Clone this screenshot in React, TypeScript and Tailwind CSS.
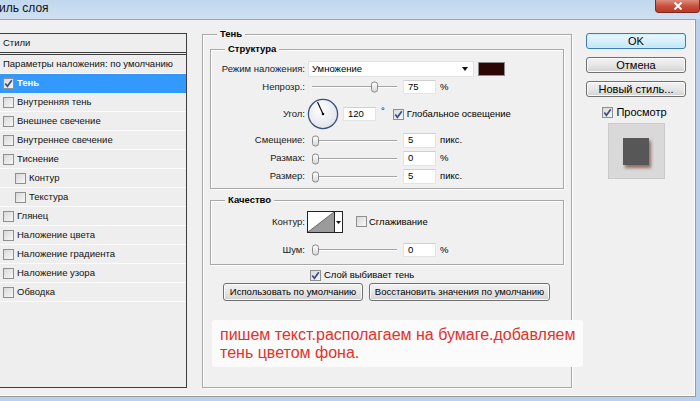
import React from 'react';

const ui = "font-['Liberation_Sans','Arial',sans-serif]";

function Check({ on = false }: { on?: boolean }) {
  return (
    <span className="inline-flex w-[11px] h-[11px] shrink-0 items-center justify-center border border-[#8e8f8f] bg-gradient-to-br from-[#d9d9d9] to-[#f7f7f7]">
      {on && (
        <svg viewBox="0 0 9 9" className="w-[9px] h-[9px]">
          <path d="M1.3 4.6 L3.4 7.3 L7.8 1.2" stroke="#3a4c8c" strokeWidth="1.7" fill="none" />
        </svg>
      )}
    </span>
  );
}

function Slider({ thumb }: { thumb: string }) {
  return (
    <div className="relative w-[89px] h-full ml-[3px]">
      <div className="absolute left-[4px] right-0 top-1/2 -translate-y-1/2 h-[2px] border-t border-[#a3a3a3] border-b border-b-white" />
      <div className={`absolute top-1/2 -translate-y-1/2 w-[7px] h-[11px] rounded-[3px] border border-[#8a8a8a] bg-gradient-to-b from-white to-[#d7d7d7] ${thumb}`} />
    </div>
  );
}

function Field({ value }: { value: string }) {
  return (
    <div className="w-[33px] h-full bg-white border border-[#e4e4e4] border-t-[#d0d0d0] pl-[4px] flex items-center text-[9.5px] text-black">
      {value}
    </div>
  );
}

function Row({ label, className, children }: { label: string; className: string; children: React.ReactNode }) {
  return (
    <div className={`flex items-center ${className}`}>
      <div className="w-[94px] text-right text-[9.5px] text-[#1a1a1a] shrink-0">{label}</div>
      {children}
    </div>
  );
}

function Group({ title, className, children }: { title: string; className: string; children: React.ReactNode }) {
  return (
    <div className={`relative border border-[#a8a8a8] shadow-[inset_1px_1px_0_#ffffff,1px_1px_0_#ffffff] ${className}`}>
      <span className="absolute -top-[7px] left-[14px] px-[3px] bg-[#f0f0f0] text-[9.5px] font-bold leading-[12px] text-black">{title}</span>
      {children}
    </div>
  );
}

function Button({ children, className }: { children: React.ReactNode; className: string }) {
  return (
    <div className={`flex items-center justify-center rounded-[3px] border border-[#707070] bg-gradient-to-b from-[#f3f3f3] via-[#e6e6e6] to-[#d3d3d3] text-black shadow-[inset_0_0_0_1px_#fbfbfb] ${className}`}>
      {children}
    </div>
  );
}

const styles = [
  { name: 'Тень', on: true, sel: true },
  { name: 'Внутренняя тень' },
  { name: 'Внешнее свечение' },
  { name: 'Внутреннее свечение' },
  { name: 'Тиснение' },
  { name: 'Контур', sub: true },
  { name: 'Текстура', sub: true },
  { name: 'Глянец' },
  { name: 'Наложение цвета' },
  { name: 'Наложение градиента' },
  { name: 'Наложение узора' },
  { name: 'Обводка' },
];

export default function App() {
  return (
    <div className={`w-[700px] h-[401px] overflow-hidden flex flex-col bg-[#b9d1ea] ${ui}`}>
      {/* title bar */}
      <div className="h-[19px] shrink-0 flex items-start justify-between bg-gradient-to-b from-[#c1d7ee] to-[#cfe0f2]">
        <span className="text-[12px] leading-[16px] text-[#111] -ml-[1px]">иль слоя</span>
        <div className="w-[45px] h-[13px] rounded-b-[4px] border border-t-0 border-[#7e2a20] bg-gradient-to-b from-[#dc8b7c] via-[#c9503d] to-[#b93a26] flex items-center justify-center">
          <svg viewBox="0 0 10 8" className="w-[10px] h-[8px]">
            <path d="M1.5 0.5 L8.5 7.5 M8.5 0.5 L1.5 7.5" stroke="#fff" strokeWidth="2" />
          </svg>
        </div>
      </div>

      {/* dialog body */}
      <div className="relative flex-1 mr-[4px] mb-[4px] flex items-start bg-[#f0f0f0] border-t border-t-[#97a8bb] border-r border-r-[#9a9a9a] border-b border-b-[#9a9a9a] shadow-[inset_-1px_-1px_0_#ffffff]">
        {/* left list */}
        <div className="mt-[13px] w-[187px] h-[355px] shrink-0 border-t border-r border-b border-[#3e3e3e] bg-[#eeeeee] text-[9.5px] text-[#111]">
          <div className="h-[21px] pl-[3px] flex items-center border-b-[3px] border-double border-[#3e3e3e]">Стили</div>
          <div className="h-[19px] pl-[3px] flex items-center border-b border-[#fbfbfb]">Параметры наложения: по умолчанию</div>
          {styles.map((s) => (
            <div
              key={s.name}
              className={`h-[19px] flex items-center gap-[3px] border-b ${s.sel ? 'bg-[#3399ff] border-[#3399ff] text-white font-bold' : 'border-[#fbfbfb]'} ${s.sub ? 'pl-[15px]' : 'pl-[3px]'}`}
            >
              <Check on={s.on} />
              <span>{s.name}</span>
            </div>
          ))}
        </div>

        {/* main group */}
        <Group title="Тень" className="ml-[15px] mt-[14px] w-[370px] h-[354px] shrink-0 flex flex-col">
          <Group title="Структура" className="ml-[7px] mt-[14px] w-[354px] h-[140px] flex flex-col">
            <Row label="Режим наложения:" className="mt-[11px] h-[16px]">
              <div className="ml-[3px] w-[166px] h-full bg-white border border-[#e2e2e2] flex items-center justify-between pl-[3px] pr-[5px] text-[9.5px]">
                <span>Умножение</span>
                <svg viewBox="0 0 6 4" className="w-[6px] h-[4px]"><path d="M0 0 H6 L3 4 Z" fill="#111" /></svg>
              </div>
              <div className="ml-[4px] w-[27px] h-[14px] bg-[#2b0604] border border-[#8c8c8c]" />
            </Row>
            <Row label="Непрозр.:" className="mt-[3px] h-[14px]">
              <Slider thumb="left-[63px]" />
              <div className="ml-[6px] h-full"><Field value="75" /></div>
              <span className="ml-[4px] text-[9.5px]">%</span>
            </Row>
            <Row label="Угол:" className="mt-[4px] h-[32px]">
              <svg viewBox="0 0 32 32" className="ml-[2px] w-[32px] h-[32px]">
                <defs>
                  <radialGradient id="dial" cx="40%" cy="35%" r="70%">
                    <stop offset="0%" stopColor="#ffffff" />
                    <stop offset="100%" stopColor="#dfe2ea" />
                  </radialGradient>
                </defs>
                <circle cx="16" cy="16" r="14.6" fill="url(#dial)" stroke="#3b4d7d" strokeWidth="1.3" />
                <path d="M16 16 L10.5 4" stroke="#111" strokeWidth="1.2" />
                <circle cx="16" cy="16" r="1.3" fill="#111" />
              </svg>
              <div className="ml-[4px] h-[14px]"><Field value="120" /></div>
              <span className="ml-[5px] -mt-[6px] text-[9.5px]">°</span>
              <span className="ml-[8px]"><Check on /></span>
              <span className="ml-[3px] text-[9.5px]">Глобальное освещение</span>
            </Row>
            <Row label="Смещение:" className="mt-[3px] h-[15px]">
              <Slider thumb="left-[4px]" />
              <div className="ml-[6px] h-full"><Field value="5" /></div>
              <span className="ml-[4px] text-[9.5px]">пикс.</span>
            </Row>
            <Row label="Размах:" className="mt-[3px] h-[15px]">
              <Slider thumb="left-[4px]" />
              <div className="ml-[6px] h-full"><Field value="0" /></div>
              <span className="ml-[4px] text-[9.5px]">%</span>
            </Row>
            <Row label="Размер:" className="mt-[3px] h-[15px]">
              <Slider thumb="left-[4px]" />
              <div className="ml-[6px] h-full"><Field value="5" /></div>
              <span className="ml-[4px] text-[9.5px]">пикс.</span>
            </Row>
          </Group>

          <Group title="Качество" className="ml-[7px] mt-[11px] w-[354px] h-[65px] flex flex-col">
            <Row label="Контур:" className="mt-[10px] h-[22px]">
              <div className="ml-[2px] w-[36px] h-full flex border border-[#222] bg-white">
                <svg viewBox="0 0 26 20" preserveAspectRatio="none" className="w-[26px] h-full">
                  <path d="M0 20 L26 0 L26 20 Z" fill="#9b9b9b" />
                  <path d="M0 20 L26 0" stroke="#555" strokeWidth="0.8" />
                </svg>
                <div className="flex-1 border-l border-[#222] flex items-center justify-center">
                  <svg viewBox="0 0 5 3" className="w-[5px] h-[3px]"><path d="M0 0 H5 L2.5 3 Z" fill="#111" /></svg>
                </div>
              </div>
              <span className="ml-[13px]"><Check /></span>
              <span className="ml-[2px] text-[9.5px]">Сглаживание</span>
            </Row>
            <Row label="Шум:" className="mt-[10px] h-[14px]">
              <Slider thumb="left-[4px]" />
              <div className="ml-[6px] h-full"><Field value="0" /></div>
              <span className="ml-[4px] text-[9.5px]">%</span>
            </Row>
          </Group>

          <div className="mt-[3px] ml-[107px] h-[14px] flex items-center gap-[3px] text-[9.5px]">
            <Check on />
            <span>Слой выбивает тень</span>
          </div>
          <div className="mt-[1px] ml-[20px] h-[18px] flex gap-[6px] text-[9.5px]">
            <Button className="w-[140px] h-full">Использовать по умолчанию</Button>
            <Button className="w-[181px] h-full">Восстановить значения по умолчанию</Button>
          </div>
        </Group>

        {/* right column */}
        <div className="ml-[14px] mt-[13px] w-[100px] shrink-0 flex flex-col text-[11px]">
          <div className="h-[16px] flex items-center justify-center rounded-[3px] border border-[#3c7fb1] bg-gradient-to-b from-[#eaf6fd] via-[#d9f0fc] to-[#bee6fd] shadow-[inset_0_0_0_1px_#cdeeff]">OK</div>
          <Button className="mt-[8px] h-[16px]">Отмена</Button>
          <Button className="mt-[8px] h-[16px]">Новый стиль...</Button>
          <div className="mt-[9px] h-[12px] flex items-center justify-center gap-[3px] -ml-[3px]">
            <Check on />
            <span>Просмотр</span>
          </div>
          <div className="mt-[5px] mx-auto w-[57px] h-[56px] bg-[#d9d9d9] border border-[#cacaca] pl-[14px] pt-[14px]">
            <div className="w-[26px] h-[27px] bg-[#575757] shadow-[2px_3px_3px_rgba(110,50,30,0.65)]" />
          </div>
        </div>

        {/* annotation over the dialog */}
        <div className="absolute left-[212px] top-[300px] w-[371px] h-[47px] rounded-[3px] bg-[#fbfbfb] pl-[8px] pt-[6px] text-[16px] leading-[18px] text-[#e3322a]">
          пишем текст.располагаем на бумаге.добавляем
          <br />
          тень цветом фона.
        </div>
      </div>
    </div>
  );
}
